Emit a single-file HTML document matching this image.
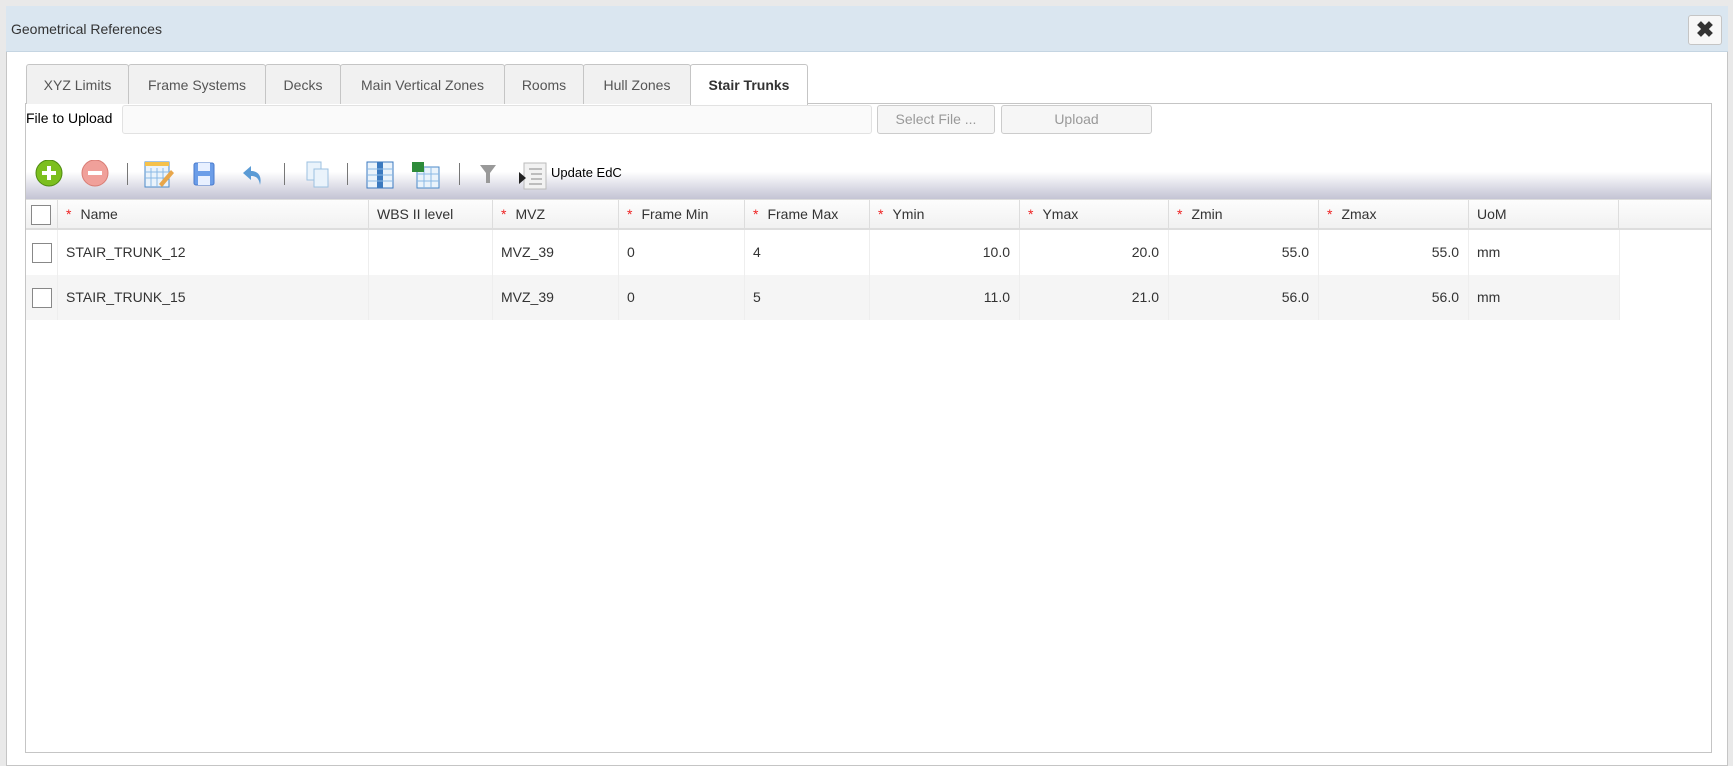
<!DOCTYPE html>
<html><head><meta charset="utf-8"><style>
*{box-sizing:border-box;margin:0;padding:0}
body{width:1733px;height:758px;background:#e9e9e9;font-family:"Liberation Sans",sans-serif;font-size:14px;color:#333;position:relative;overflow:hidden}
.a{position:absolute}
.dlg{left:6px;top:6px;width:1722px;height:760px;background:#fff;border:1px solid #c5c5c5}
.title{left:6px;top:6px;width:1722px;height:46px;background:#dae6f0;border-bottom:1px solid #c5d5e2}
.close{left:1688px;top:15px;width:34px;height:30px;background:#f7f7f7;border:1px solid #c5c5c5;border-radius:3px;font-size:22px;font-weight:bold;text-align:center;line-height:28px;color:#333}
.tab{top:64px;height:40px;background:#f1f1f1;border:1px solid #c5c5c5;border-bottom:none;border-radius:3px 3px 0 0;text-align:center;line-height:40px;color:#555;font-size:14px}
.panel{left:25px;top:103px;width:1687px;height:650px;border:1px solid #c5c5c5;background:#fff}
.btn{top:105px;height:29px;border:1px solid #ccc;border-radius:3px;background:#f6f6f6;color:#999;text-align:center;line-height:27px}
.tb{left:26px;top:157px;width:1685px;height:42px;background:linear-gradient(#fff 0%,#fff 35%,#d9d9e4 75%,#c4c4d4 100%)}
.sep{top:163px;width:1px;height:22px;background:#777}
.hdr{left:26px;top:199px;width:1685px;height:31px;background:linear-gradient(#fdfdfd,#f1f1f1);border-bottom:2px solid #ddd;border-top:1px solid #ddd}
.c{position:absolute;top:0;height:100%;border-right:1px solid #ddd;padding-left:9px;line-height:29px;white-space:nowrap}
.s{color:#e22;margin-right:9px}
.row{left:26px;width:1594px;height:45px}
.row .c{line-height:45px;border-right:1px solid #eee}
.r{text-align:right;padding-right:9px}
.cb{position:absolute;left:6px;width:20px;height:20px;border:1px solid #888;background:#fff}
</style></head><body>
<div class="a dlg"></div>
<div class="a title"></div>
<div class="a" style="left:11px;top:21px;font-size:14px;color:#333">Geometrical References</div>
<div class="a close">✖</div>
<div class="a panel"></div>
<div class="a tab" style="left:26px;width:103px">XYZ Limits</div>
<div class="a tab" style="left:128px;width:138px">Frame Systems</div>
<div class="a tab" style="left:265px;width:76px">Decks</div>
<div class="a tab" style="left:340px;width:165px">Main Vertical Zones</div>
<div class="a tab" style="left:504px;width:80px">Rooms</div>
<div class="a tab" style="left:583px;width:108px">Hull Zones</div>
<div class="a tab" style="left:690px;width:118px;height:41px;background:#fff;font-weight:bold;color:#333">Stair Trunks</div>
<div class="a" style="left:26px;top:110px;color:#000">File to Upload</div>
<div class="a" style="left:122px;top:105px;width:750px;height:29px;border:1px solid #e2e2e2;border-radius:3px;background:#fafafa"></div>
<div class="a btn" style="left:877px;width:118px">Select File ...</div>
<div class="a btn" style="left:1001px;width:151px">Upload</div>
<div class="a tb"></div>
<div class="a sep" style="left:127px"></div>
<div class="a sep" style="left:284px"></div>
<div class="a sep" style="left:347px"></div>
<div class="a sep" style="left:459px"></div>
<svg class="a" style="left:33px;top:160px" width="540" height="36">
<circle cx="16" cy="13" r="13" fill="#7cbf1e" stroke="#4e8a10"/><rect x="9" y="11" width="14" height="4" fill="#fff"/><rect x="14" y="6" width="4" height="14" fill="#fff"/>
<circle cx="62" cy="13" r="13" fill="#f0a09a" stroke="#d87c74"/><rect x="55" y="11" width="14" height="4" fill="#fff"/>
<rect x="112" y="2" width="24" height="25" fill="#eaf3fb" stroke="#4b8ac8"/><rect x="112" y="2" width="24" height="4" fill="#f5c14a"/><path d="M118 8v19M124 8v19M130 8v19M112 12h24M112 18h24" stroke="#8ab8e4"/><path d="M126 24l12-14 3 3-12 14z" fill="#e8a64a"/>
<rect x="161" y="3" width="20" height="22" rx="2" fill="#6b9de8" stroke="#4a7acc"/><rect x="165" y="3" width="12" height="8" fill="#e8f0ff"/><rect x="165" y="16" width="12" height="9" fill="#e8f0ff"/>
<path d="M218 6l-8 7 8 7v-4c5 0 8 2 9 9 2-8-1-14-9-14z" fill="#5b9bd5"/>
<rect x="274" y="2" width="14" height="18" fill="#eaf3fb" stroke="#9cc0e0"/><rect x="281" y="9" width="14" height="18" fill="#eaf3fb" stroke="#9cc0e0"/>
<rect x="334" y="2" width="26" height="26" fill="#eaf3fb" stroke="#3b7ac0"/><rect x="344" y="2" width="6" height="26" fill="#3b7ac0"/><path d="M334 9h26M334 15h26M334 21h26" stroke="#8ab8e4"/>
<rect x="384" y="7" width="22" height="21" fill="#eaf3fb" stroke="#4b8ac8"/><path d="M391 7v21M398 7v21M384 14h22M384 21h22" stroke="#8ab8e4"/><rect x="379" y="2" width="12" height="10" fill="#2e8b3a"/>
<path d="M447 5h16l-6 8v10h-4v-10z" fill="#999"/>
<rect x="491" y="3" width="22" height="26" fill="#f2f2f2" stroke="#bbb"/><path d="M496 9h13M498 14h11M498 19h11M496 24h13" stroke="#888"/><path d="M486 12l7 6-7 6z" fill="#222"/>
</svg>
<div class="a" style="left:551px;top:165px;color:#000;font-size:13px">Update EdC</div>
<div class="a hdr">
<div class="c" style="left:0;width:32px"><div class="cb" style="top:5px;left:5px"></div></div>
<div class="c" style="left:31px;width:312px"><span class="s">*</span>Name</div>
<div class="c" style="left:342px;width:125px">WBS II level</div>
<div class="c" style="left:466px;width:127px"><span class="s">*</span>MVZ</div>
<div class="c" style="left:592px;width:127px"><span class="s">*</span>Frame Min</div>
<div class="c" style="left:718px;width:126px"><span class="s">*</span>Frame Max</div>
<div class="c" style="left:843px;width:151px"><span class="s">*</span>Ymin</div>
<div class="c" style="left:993px;width:150px"><span class="s">*</span>Ymax</div>
<div class="c" style="left:1142px;width:151px"><span class="s">*</span>Zmin</div>
<div class="c" style="left:1292px;width:151px"><span class="s">*</span>Zmax</div>
<div class="c" style="left:1442px;width:151px">UoM</div>
</div>
<div class="a row" style="top:230px;background:#fff">
<div class="c" style="left:0;width:32px"><div class="cb" style="top:13px"></div></div>
<div class="c" style="left:31px;width:312px">STAIR_TRUNK_12</div>
<div class="c" style="left:342px;width:125px"></div>
<div class="c" style="left:466px;width:127px">MVZ_39</div>
<div class="c" style="left:592px;width:127px">0</div>
<div class="c" style="left:718px;width:126px">4</div>
<div class="c r" style="left:843px;width:151px">10.0</div>
<div class="c r" style="left:993px;width:150px">20.0</div>
<div class="c r" style="left:1142px;width:151px">55.0</div>
<div class="c r" style="left:1292px;width:151px">55.0</div>
<div class="c" style="left:1442px;width:152px">mm</div>
</div>
<div class="a row" style="top:275px;background:#f5f5f5">
<div class="c" style="left:0;width:32px"><div class="cb" style="top:13px"></div></div>
<div class="c" style="left:31px;width:312px">STAIR_TRUNK_15</div>
<div class="c" style="left:342px;width:125px"></div>
<div class="c" style="left:466px;width:127px">MVZ_39</div>
<div class="c" style="left:592px;width:127px">0</div>
<div class="c" style="left:718px;width:126px">5</div>
<div class="c r" style="left:843px;width:151px">11.0</div>
<div class="c r" style="left:993px;width:150px">21.0</div>
<div class="c r" style="left:1142px;width:151px">56.0</div>
<div class="c r" style="left:1292px;width:151px">56.0</div>
<div class="c" style="left:1442px;width:152px">mm</div>
</div>
</body></html>
